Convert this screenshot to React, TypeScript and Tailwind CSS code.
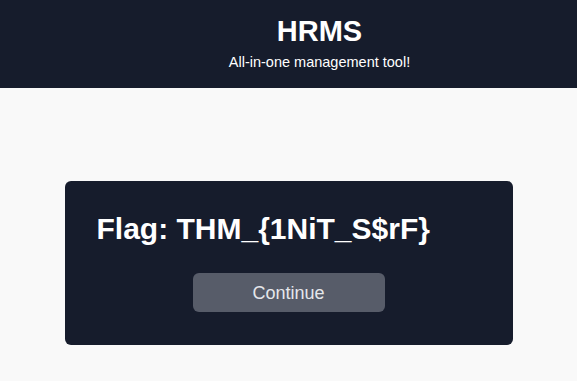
import React from 'react';

export default function App() {
  return (
    <div className="min-h-[381px] bg-[#f9f9f9] font-['Liberation_Sans',Arial,sans-serif]">
      <header className="h-[88px] bg-[#161c2c] pt-[17px] pl-[62px] flex flex-col items-center text-white">
        <h1 className="text-[29px] leading-[28px] font-bold">HRMS</h1>
        <p className="mt-[10px] text-[14.5px] leading-[14px]">All-in-one management tool!</p>
      </header>
      <main className="pt-[93px] pb-8">
        <div className="mx-auto w-[448px] rounded-md bg-[#161c2c] px-8 pt-[30px] pb-[33px]">
          <h2 className="text-3xl font-bold text-white">Flag: THM_{'{'}1NiT_S$rF{'}'}</h2>
          <div className="mt-[26px] flex justify-center">
            <button className="w-48 h-[39px] rounded-md bg-[#575c69] text-lg text-gray-200">
              Continue
            </button>
          </div>
        </div>
      </main>
    </div>
  );
}
